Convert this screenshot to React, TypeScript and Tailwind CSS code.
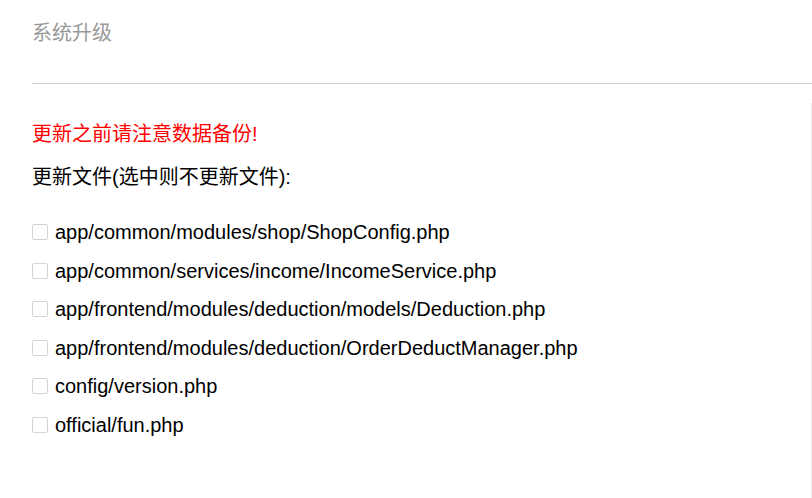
import React from "react";

const files = [
  "app/common/modules/shop/ShopConfig.php",
  "app/common/services/income/IncomeService.php",
  "app/frontend/modules/deduction/models/Deduction.php",
  "app/frontend/modules/deduction/OrderDeductManager.php",
  "config/version.php",
  "official/fun.php",
];

export default function App() {
  return (
    <div
      className="w-[812px] h-[498px] bg-white overflow-hidden pl-[32px]"
      style={{ fontFamily: '"Liberation Sans", "Noto Sans CJK SC", sans-serif' }}
    >
      <div className="h-[84px] border-b border-[#cccccc] pt-[23px]">
        <div className="text-[20px] leading-[20px] text-[#999999]">系统升级</div>
      </div>
      <div className="mt-[19px] h-[395px] border-r border-[#eeeeee] pt-[17px]">
        <div className="text-[20px] leading-[28px] text-[#ff0000]">更新之前请注意数据备份!</div>
        <div className="mt-[15px] text-[20px] leading-[28px] text-black">更新文件(选中则不更新文件):</div>
        <div className="mt-[21.7px] flex flex-col">
          {files.map((f) => (
            <label key={f} className="h-[38.6px] flex items-center text-[20px] text-black">
              <span className="w-[16px] h-[16px] border border-[#d4d4d8] rounded-[2px] bg-white shrink-0" />
              <span className="ml-[7px] leading-[24px]">{f}</span>
            </label>
          ))}
        </div>
      </div>
    </div>
  );
}
